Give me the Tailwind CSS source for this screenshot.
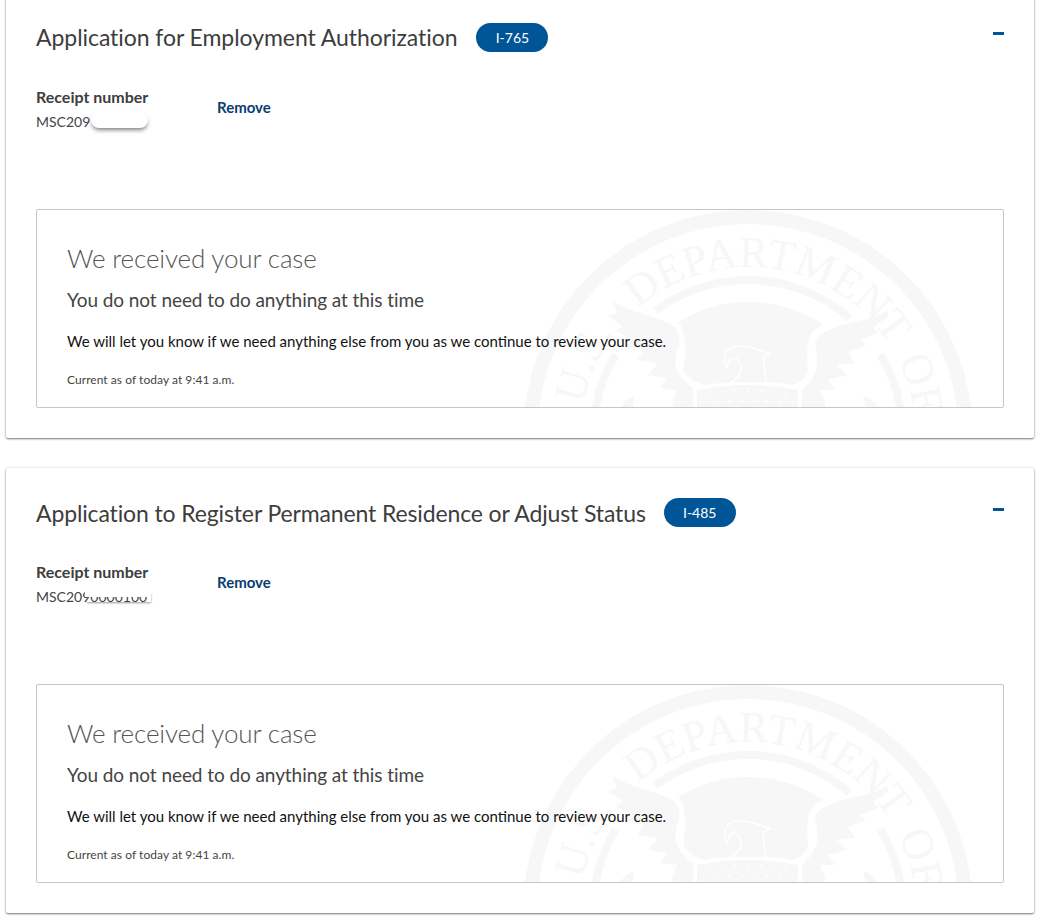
<!DOCTYPE html>
<html lang="en">
<head>
<meta charset="UTF-8">
<title>Cases</title>
<script src="https://cdn.jsdelivr.net/npm/@tailwindcss/browser@4"></script>
</head>
<body class="bg-white overflow-hidden font-['Lato',sans-serif]">
<div class="h-[924px] pl-[6px] pr-[3px] flex flex-col gap-[30px] -mt-[7px]">

  <section class="bg-white rounded-[2px] shadow-[0_1px_2px_rgba(0,0,0,0.5),0_0_3px_rgba(0,0,0,0.12)] h-[445px] pt-[30px] px-[30px] shrink-0">
    <div class="flex items-center h-[29px] relative">
      <h2 class="text-[23px] tracking-[-0.06px] font-normal text-[#3d3d3d]">Application for Employment Authorization</h2>
      <span class="ml-[19px] w-[72px] h-[29px] rounded-full bg-[#005596] text-white text-[14px] flex items-center justify-center">I-765</span>
      <span class="absolute right-0 top-[9px] w-[11px] h-[3px] bg-[#005596]"></span>
    </div>
    <div class="flex mt-[35px] h-[48px]">
      <div class="w-[181px] relative">
        <p class="text-[16px] font-bold leading-[19px] text-[#3d3d3d]">Receipt number</p>
        <p class="text-[14px] leading-[32px] text-[#444]">MSC209</p>
        <span class="absolute left-[55px] top-[25px] w-[57px] h-[16px] bg-white rounded-[8px] shadow-[0_3px_4px_-1px_rgba(0,0,0,0.5)]"></span>
      </div>
      <a class="text-[15px] font-bold text-[#0b3d6e] leading-[21px] mt-[10px]">Remove</a>
    </div>
    <div class="relative mt-[74px] h-[199px] border border-[#c6c6c6] rounded-[2px] overflow-hidden pl-[30px] pt-[30px]">
      <svg class="absolute left-0 top-0" width="966" height="197" viewBox="37 210 966 197" fill="#f7f7f7" aria-hidden="true">
        <defs>
          <path id="seal-text" d="M580.4 434.6A167.6 167.6 0 0 1 915.6 434.6"/>
          <g id="seal">
            <circle cx="748" cy="434.6" r="217.6" fill="none" stroke="#f7f7f7" stroke-width="14"/>
            <path d="M655.4 310.8A154.6 154.6 0 0 1 849.4 317.9M615.6 354.6A154.6 154.6 0 0 0 593.4 434.6M880.4 354.6A154.6 154.6 0 0 1 902.6 434.6" fill="none" stroke="#f7f7f7" stroke-width="8"/>
            <text font-family="Liberation Serif" font-size="44"><textPath href="#seal-text" startOffset="30">U.S.</textPath></text>
            <text font-family="Liberation Serif" font-size="44"><textPath href="#seal-text" startOffset="143">DEPARTMENT</textPath></text>
            <text font-family="Liberation Serif" font-size="44"><textPath href="#seal-text" startOffset="449">OF</textPath></text>
            <!-- dome behind the eagle head -->
            <path d="M678 322Q712 302 747 302Q790 302 823 325Q810 330 809 340Q806 350 808 370Q806 381 793 385Q750 378 705 385Q690 382 683 370Q687 350 684 335Q683 327 678 322Z"/>
            <!-- head -->
            <path d="M725 361Q724 350 733 347Q745 343 770 354L763 357L766 383L730 383Q742 376 741 365Q738 358 733 358Q728 360 727 368Q725 365 725 361Z" stroke="#fff" stroke-width="1.5"/>
            <!-- wings -->
            <path d="M612 300Q618 306 640 313Q665 320 675 327Q681 335 679 345Q674 358 676 368Q682 382 693 388L693 408L674 408L672 403L677 390L660 388L667 378L648 375L658 363L638 360L643 350L626 346L632 340L616 331L623 326L608 316L617 313Z"/>
            <path d="M887 310Q880 317 853 322Q830 328 820 335Q815 340 815 343Q818 355 817 367Q815 378 802 390L802 408L825 408L825 403L820 390L835 390L828 380L847 375L837 365L855 363L848 352L866 345L860 340L878 333L873 327L888 317Z"/>
            <!-- lower feathers either side of the shield -->
            <path d="M620 408Q626 398 634 396L633 408Z"/>
            <path d="M863 396Q872 398 878 408L866 408Z"/>
            <!-- shield -->
            <path d="M697 390Q747 380 798 390L798 408L697 408Z"/>
            <g fill="#fff">
              <circle cx="710" cy="394" r="1.2"/><circle cx="723" cy="392" r="1.2"/><circle cx="735" cy="391" r="1.2"/><circle cx="748" cy="391" r="1.2"/><circle cx="761" cy="391" r="1.2"/><circle cx="773" cy="392" r="1.2"/><circle cx="786" cy="394" r="1.2"/>
              <circle cx="704" cy="403" r="1.2"/><circle cx="717" cy="402" r="1.2"/><circle cx="729" cy="401" r="1.2"/><circle cx="742" cy="401" r="1.2"/><circle cx="755" cy="401" r="1.2"/><circle cx="767" cy="401" r="1.2"/><circle cx="780" cy="402" r="1.2"/><circle cx="792" cy="403" r="1.2"/>
            </g>
          </g>
        </defs>
        <use href="#seal"/>
      </svg>
      <div class="relative">
        <h3 class="text-[26px] tracking-[-0.15px] leading-[36px] font-light text-[#555]">We received your case</h3>
        <p class="text-[19px] tracking-[-0.07px] leading-[24px] mt-[12px] text-[#444]">You do not need to do anything at this time</p>
        <p class="text-[15px] leading-[22px] mt-[18px] text-[#111]">We will let you know if we need anything else from you as we continue to review your case.</p>
        <p class="text-[12px] tracking-[0.05px] leading-[16px] mt-[20px] text-[#444]">Current as of today at 9:41 a.m.</p>
      </div>
    </div>
  </section>

  <section class="bg-white rounded-[2px] shadow-[0_1px_2px_rgba(0,0,0,0.5),0_0_3px_rgba(0,0,0,0.12)] h-[445px] pt-[30px] px-[30px] shrink-0">
    <div class="flex items-center h-[29px] relative">
      <h2 class="text-[23px] tracking-[-0.13px] font-normal text-[#3d3d3d] translate-y-[1px]">Application to Register Permanent Residence or Adjust Status</h2>
      <span class="ml-[18px] w-[72px] h-[29px] rounded-full bg-[#005596] text-white text-[14px] flex items-center justify-center">I-485</span>
      <span class="absolute right-0 top-[10px] w-[11px] h-[3px] bg-[#005596]"></span>
    </div>
    <div class="flex mt-[35px] h-[48px]">
      <div class="w-[181px] relative">
        <p class="text-[16px] font-bold leading-[19px] text-[#3d3d3d]">Receipt number</p>
        <p class="text-[14px] leading-[32px] text-[#444]">MSC2090000100</p>
        <span class="absolute left-[49px] top-[29px] w-[66px] h-[11px] shadow-[1px_2px_2px_-1px_rgba(0,0,0,0.4)]">
          <span class="block h-[6px] bg-white"></span>
        </span>
      </div>
      <a class="text-[15px] font-bold text-[#0b3d6e] leading-[21px] mt-[10px]">Remove</a>
    </div>
    <div class="relative mt-[74px] h-[199px] border border-[#c6c6c6] rounded-[2px] overflow-hidden pl-[30px] pt-[30px]">
      <svg class="absolute left-0 top-0" width="966" height="197" viewBox="37 210 966 197" fill="#f7f7f7" aria-hidden="true">
        <use href="#seal"/>
      </svg>
      <div class="relative">
        <h3 class="text-[26px] tracking-[-0.15px] leading-[36px] font-light text-[#555]">We received your case</h3>
        <p class="text-[19px] tracking-[-0.07px] leading-[24px] mt-[12px] text-[#444]">You do not need to do anything at this time</p>
        <p class="text-[15px] leading-[22px] mt-[18px] text-[#111]">We will let you know if we need anything else from you as we continue to review your case.</p>
        <p class="text-[12px] tracking-[0.05px] leading-[16px] mt-[20px] text-[#444]">Current as of today at 9:41 a.m.</p>
      </div>
    </div>
  </section>

</div>
</body>
</html>
